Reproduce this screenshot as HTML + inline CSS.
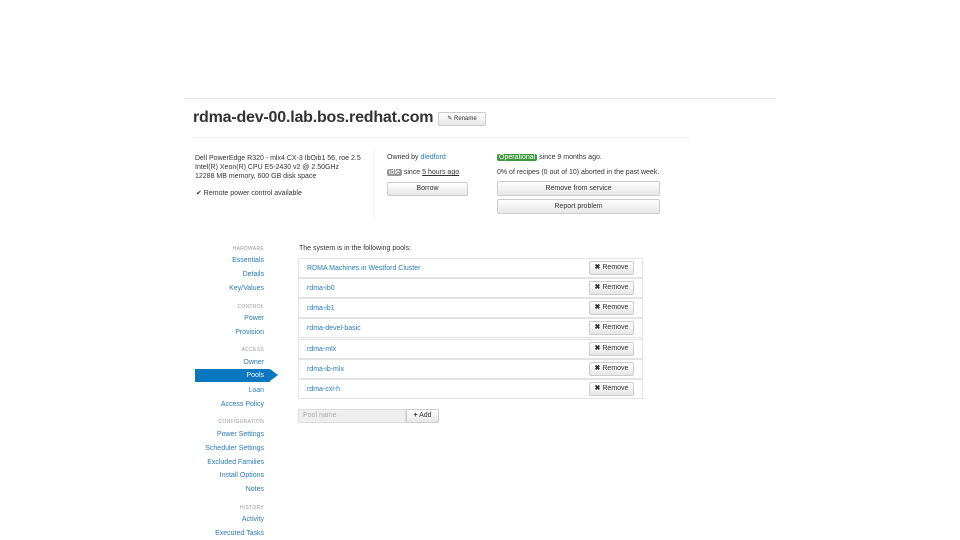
<!DOCTYPE html>
<html><head><meta charset="utf-8"><style>
body{margin:0;width:960px;height:540px;background:#fff;position:relative;overflow:hidden;font-family:"Liberation Sans",sans-serif;color:#333}
.a{position:absolute;white-space:nowrap}
.s{font-size:7px;line-height:9px}
.l{color:#2a7ab8}
.btn{position:absolute;border:1px solid #ccc;border-radius:2px;background:linear-gradient(#fff,#e6e6e6);font-size:7px;text-align:center;color:#333;box-sizing:border-box}
.nav{position:absolute;right:696px;font-size:7px;color:#2a7ab8;white-space:nowrap}
.hd{position:absolute;right:696px;font-size:5px;color:#999;letter-spacing:.3px}
.row{position:absolute;left:298px;width:345px;height:20px;border:1px solid #e3e3e3;box-sizing:border-box;font-size:7px;color:#2a7ab8;line-height:19px;padding-left:8px}
</style></head><body>
<div class="a" style="left:185px;top:98px;width:590px;height:1px;background:#e8e8e8"></div>
<div class="a" style="left:193px;top:109px;font-size:16px;font-weight:bold;color:#333;letter-spacing:-0.2px">rdma-dev-00.lab.bos.redhat.com</div>
<div class="btn" style="left:438px;top:112px;width:48px;height:14px;line-height:12px;font-size:6px">✎ Rename</div>
<div class="a" style="left:193px;top:137px;width:497px;height:1px;background:#eee"></div>

<div class="a s" style="left:195px;top:154px">Dell PowerEdge R320 - mlx4 CX-3 IbOib1 56, roe 2.5<br>Intel(R) Xeon(R) CPU E5-2430 v2 @ 2.50GHz<br>12288 MB memory, 600 GB disk space</div>
<div class="a s" style="left:196px;top:189px">✔ Remote power control available</div>
<div class="a" style="left:373px;top:150px;width:1px;height:68px;background:#eee"></div>

<div class="a s" style="left:387px;top:153px">Owned by <span class="l">dledford</span></div>
<div class="a s" style="left:387px;top:168px"><span style="background:#999;color:#fff;padding:0 2px;border-radius:2px">idle</span> since <u>5 hours ago</u></div>
<div class="btn" style="left:387px;top:182px;width:81px;height:14px;line-height:12px">Borrow</div>

<div class="a s" style="left:497px;top:153px"><span style="background:#3f9a3f;color:#fff;padding:0 2px;border-radius:2px">Operational</span> since 9 months ago.</div>
<div class="a s" style="left:497px;top:168px">0% of recipes (0 out of 10) aborted in the past week.</div>
<div class="btn" style="left:497px;top:181px;width:163px;height:15px;line-height:13px">Remove from service</div>
<div class="btn" style="left:497px;top:199px;width:163px;height:15px;line-height:13px">Report problem</div>

<div class="hd" style="top:246px">HARDWARE</div>
<div class="nav" style="top:257px">Essentials</div>
<div class="nav" style="top:271px">Details</div>
<div class="nav" style="top:285px">Key/Values</div>
<div class="hd" style="top:304px">CONTROL</div>
<div class="nav" style="top:315px">Power</div>
<div class="nav" style="top:329px">Provision</div>
<div class="hd" style="top:347px">ACCESS</div>
<div class="nav" style="top:359px">Owner</div>
<div class="a" style="left:195px;top:369px;width:75px;height:13px;background:#0a78be"></div>
<div class="a" style="left:270px;top:369px;width:0;height:0;border-top:6.5px solid transparent;border-bottom:6.5px solid transparent;border-left:8px solid #0a78be"></div>
<div class="nav" style="top:372px;color:#fff">Pools</div>
<div class="nav" style="top:387px">Loan</div>
<div class="nav" style="top:401px">Access Policy</div>
<div class="hd" style="top:419px">CONFIGURATION</div>
<div class="nav" style="top:431px">Power Settings</div>
<div class="nav" style="top:445px">Scheduler Settings</div>
<div class="nav" style="top:459px">Excluded Families</div>
<div class="nav" style="top:472px">Install Options</div>
<div class="nav" style="top:486px">Notes</div>
<div class="hd" style="top:505px">HISTORY</div>
<div class="nav" style="top:516px">Activity</div>
<div class="nav" style="top:530px">Executed Tasks</div>

<div class="a s" style="left:299px;top:244px">The system is in the following pools:</div>
<div class="row" style="top:258px">RDMA Machines in Westford Cluster</div>
<div class="row" style="top:278px">rdma-ib0</div>
<div class="row" style="top:298px">rdma-ib1</div>
<div class="row" style="top:318px">rdma-devel-basic</div>
<div class="row" style="top:339px">rdma-mlx</div>
<div class="row" style="top:359px">rdma-ib-mlx</div>
<div class="row" style="top:379px">rdma-cxl-h</div>
<div class="btn" style="left:589px;top:261px;width:45px;height:14px;line-height:12px"><b>✖</b> Remove</div>
<div class="btn" style="left:589px;top:281px;width:45px;height:14px;line-height:12px"><b>✖</b> Remove</div>
<div class="btn" style="left:589px;top:301px;width:45px;height:14px;line-height:12px"><b>✖</b> Remove</div>
<div class="btn" style="left:589px;top:321px;width:45px;height:14px;line-height:12px"><b>✖</b> Remove</div>
<div class="btn" style="left:589px;top:342px;width:45px;height:14px;line-height:12px"><b>✖</b> Remove</div>
<div class="btn" style="left:589px;top:362px;width:45px;height:14px;line-height:12px"><b>✖</b> Remove</div>
<div class="btn" style="left:589px;top:382px;width:45px;height:14px;line-height:12px"><b>✖</b> Remove</div>

<div class="a" style="left:298px;top:409px;width:108px;height:14px;background:#eee;border:1px solid #ddd;box-sizing:border-box;font-size:7px;color:#aaa;line-height:12px;padding-left:4px">Pool name</div>
<div class="btn" style="left:406px;top:409px;width:33px;height:14px;line-height:12px"><b>+</b> Add</div>
</body></html>
